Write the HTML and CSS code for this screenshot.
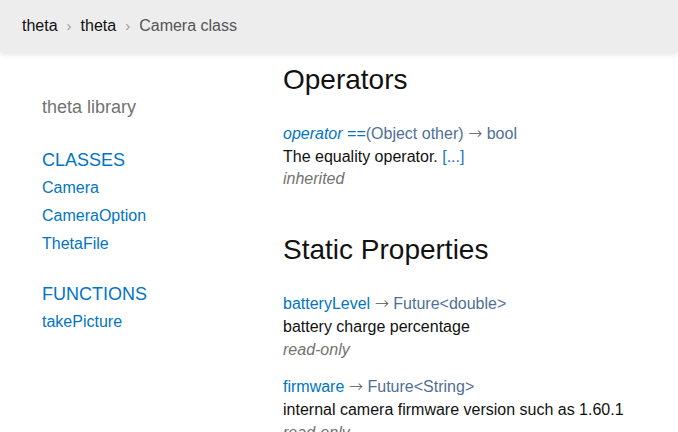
FILE: index.html
```html
<!DOCTYPE html>
<html>
<head>
<meta charset="utf-8">
<link rel="stylesheet" href="styles.css">
</head>
<body>
<header class="topbar">
  <ol class="crumbs">
    <li><a href="#">theta</a></li>
    <li class="sep">›</li>
    <li><a href="#">theta</a></li>
    <li class="sep">›</li>
    <li class="current">Camera class</li>
  </ol>
</header>
<div class="page">
  <nav class="sidebar">
    <div class="lib">theta library</div>
    <div class="group">
      <div class="group-title">CLASSES</div>
      <a class="nav-link" href="#">Camera</a>
      <a class="nav-link" href="#">CameraOption</a>
      <a class="nav-link" href="#">ThetaFile</a>
    </div>
    <div class="group">
      <div class="group-title">FUNCTIONS</div>
      <a class="nav-link" href="#">takePicture</a>
    </div>
  </nav>
  <main class="main">
    <section class="section">
      <h2 class="section-title">Operators</h2>
      <dl class="items">
        <div class="item">
          <dt class="sig"><a class="name" href="#"><em>operator</em> ==</a><span class="type">(Object other)</span> <span class="arrow">→</span> <span class="type">bool</span></dt>
          <dd class="desc">The equality operator. <a class="more" href="#">[...]</a></dd>
          <dd class="feature">inherited</dd>
        </div>
      </dl>
    </section>
    <section class="section">
      <h2 class="section-title">Static Properties</h2>
      <dl class="items">
        <div class="item">
          <dt class="sig"><a class="name" href="#">batteryLevel</a> <span class="arrow">→</span> <span class="type">Future&lt;double&gt;</span></dt>
          <dd class="desc">battery charge percentage</dd>
          <dd class="feature">read-only</dd>
        </div>
        <div class="item">
          <dt class="sig"><a class="name" href="#">firmware</a> <span class="arrow">→</span> <span class="type">Future&lt;String&gt;</span></dt>
          <dd class="desc">internal camera firmware version such as 1.60.1</dd>
          <dd class="feature">read-only</dd>
        </div>
      </dl>
    </section>
  </main>
</div>
</body>
</html>
```
FILE: styles.css
```css
* { box-sizing: border-box; }
html, body {
  margin: 0;
  padding: 0;
  height: 100%;
  overflow: hidden;
  background: #fff;
}
body {
  font-family: "Liberation Sans", Arial, sans-serif;
  font-size: 16px;
  line-height: 22.8px;
  color: #111;
  display: flex;
  flex-direction: column;
}
a { text-decoration: none; color: #0175c2; }

.topbar {
  height: 52px;
  flex: 0 0 52px;
  background: #ededed;
  box-shadow: 0 2px 6px rgba(0, 0, 0, 0.12);
  display: flex;
  align-items: center;
  padding-left: 22px;
  position: relative;
  z-index: 2;
}
.crumbs {
  list-style: none;
  margin: 0;
  padding: 0;
  display: flex;
  gap: 8px;
  align-items: baseline;
}
.crumbs a { color: #111; }
.crumbs .sep { color: #999; font-size: 15px; padding: 0 1px; }
.crumbs .current { color: #555; }

.page {
  display: flex;
  flex: 1;
}
.sidebar {
  width: 283px;
  flex: 0 0 283px;
  padding: 43px 0 0 42px;
  display: flex;
  flex-direction: column;
}
.lib {
  font-size: 18px;
  line-height: 24px;
  color: #727272;
}
.group {
  display: flex;
  flex-direction: column;
  margin-top: 29px;
}
.group + .group { margin-top: 24px; }
.group-title {
  font-size: 18px;
  line-height: 24px;
  color: #0175c2;
  margin-bottom: 2px;
}
.nav-link {
  line-height: 28px;
  color: #0175c2;
}

.main {
  flex: 1;
  padding-top: 13px;
}
.section-title {
  font-size: 28px;
  line-height: 30.8px;
  font-weight: 400;
  color: #111;
  margin: 0 0 27px;
}
.section + .section { margin-top: 44px; }
.items { margin: 0; }
.item { margin-bottom: 15px; }
.sig { margin: 0; }
.name { color: #0175c2; }
.type { color: #4f6f95; }
.arrow {
  color: #555;
  font-family: "DejaVu Sans", sans-serif;
  font-weight: 200;
  font-size: 17px;
  line-height: 16px;
}
.desc { margin: 0; color: #111; }
.more { color: #1a73c8; }
.feature { margin: 0; font-style: italic; color: #727272; }
```
